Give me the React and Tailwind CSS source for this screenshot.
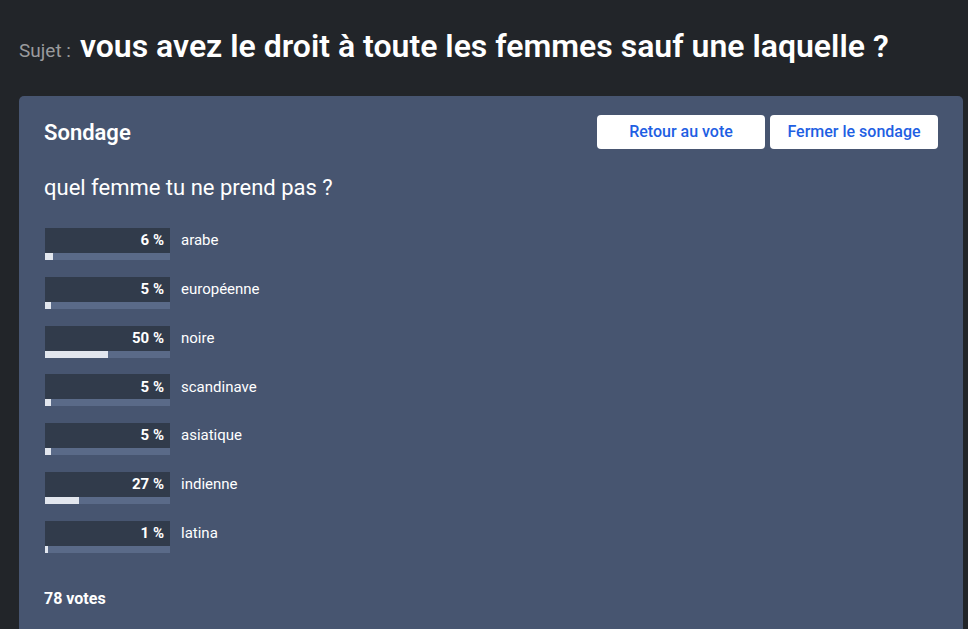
import React from "react";

const rows = [
  { p: 6, l: "arabe" },
  { p: 5, l: "européenne" },
  { p: 50, l: "noire" },
  { p: 5, l: "scandinave" },
  { p: 5, l: "asiatique" },
  { p: 27, l: "indienne" },
  { p: 1, l: "latina" },
];

export default function App() {
  return (
    <div
      className="min-h-[629px] w-full bg-[#222529] text-white overflow-hidden"
      style={{ fontFamily: "Roboto, 'Liberation Sans', sans-serif" }}
    >
      <div className="flex items-baseline pl-[19px] pt-[25px] h-[96px]">
        <span className="text-[19px] text-[#9a9b9d] mr-[9px]">Sujet :</span>
        <span className="text-[32px] font-semibold text-white leading-[42px]">
          vous avez le droit à toute les femmes sauf une laquelle ?
        </span>
      </div>
      <div className="ml-[19px] w-[944px] bg-[#475570] rounded-[5px] px-[25px] pt-[19px] pb-[24px] min-h-[540px]">
        <div className="flex items-center justify-between h-[34px]">
          <div className="text-[22px] font-semibold text-white">Sondage</div>
          <div className="flex gap-[5px]">
            <button className="w-[168px] h-[34px] bg-white rounded-[4px] text-[16px] font-medium text-[#1f5fe3]">
              Retour au vote
            </button>
            <button className="w-[168px] h-[34px] bg-white rounded-[4px] text-[16px] font-medium text-[#1f5fe3]">
              Fermer le sondage
            </button>
          </div>
        </div>
        <div className="mt-[24px] text-[22px] leading-[30px] text-white">quel femme tu ne prend pas ?</div>
        <div className="mt-[25px] flex flex-col gap-[16.8px] pl-px">
          {rows.map((r) => (
            <div key={r.l} className="flex items-start">
              <div className="w-[125px]">
                <div className="h-[25px] bg-[#313b4b] flex items-center justify-end pr-[6px] text-[15px] font-bold text-white">
                  {r.p} %
                </div>
                <div className="h-[7px] bg-[#5a6a88]">
                  <div className="h-full bg-[#e2e6ee]" style={{ width: `${Math.max(r.p, 2)}%` }} />
                </div>
              </div>
              <div className="ml-[11px] h-[25px] flex items-center text-[15px] text-white">{r.l}</div>
            </div>
          ))}
        </div>
        <div className="mt-[35px] text-[16px] font-bold text-white leading-[22px]">78 votes</div>
      </div>
    </div>
  );
}
